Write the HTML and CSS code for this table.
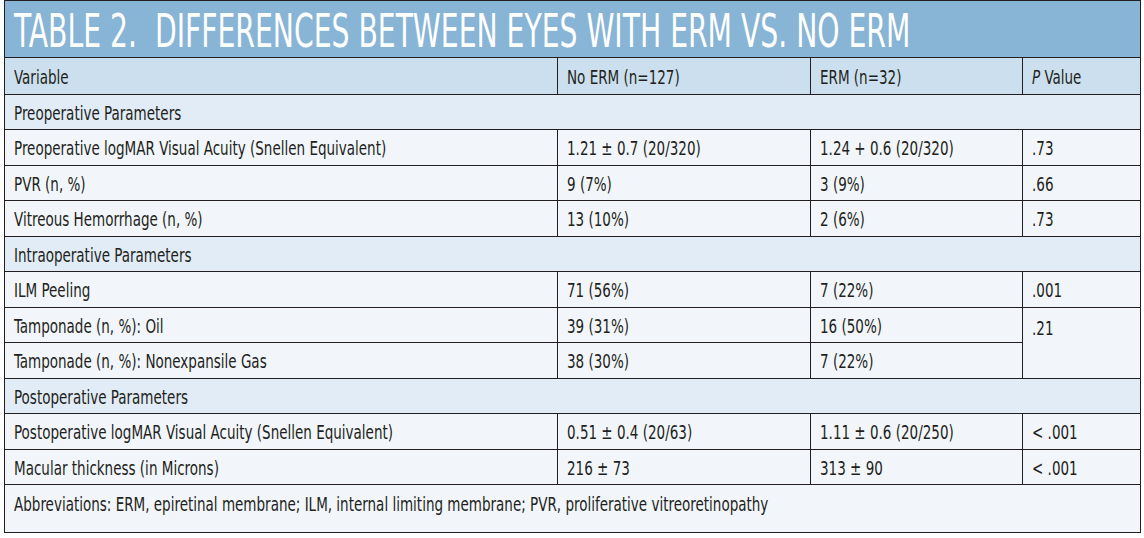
FILE: index.html
```html
<!DOCTYPE html>
<html lang="en">
<head>
<meta charset="utf-8">
<title>Table 2</title>
<link rel="stylesheet" href="styles.css">
</head>
<body>
<div class="frame">
  <div class="title"><span class="tt">TABLE 2.&nbsp; DIFFERENCES BETWEEN EYES WITH ERM VS. NO ERM</span></div>
  <table class="data">
    <colgroup><col class="c1"><col class="c2"><col class="c3"><col class="c4"></colgroup>
    <thead>
      <tr class="head">
        <th><span class="t">Variable</span></th>
        <th><span class="t">No ERM (n=127)</span></th>
        <th><span class="t">ERM (n=32)</span></th>
        <th><span class="t"><i>P</i> Value</span></th>
      </tr>
    </thead>
    <tbody>
      <tr class="sec"><td colspan="4"><span class="t">Preoperative Parameters</span></td></tr>
      <tr class="row">
        <td><span class="t">Preoperative logMAR Visual Acuity (Snellen Equivalent)</span></td>
        <td><span class="t">1.21 ± 0.7 (20/320)</span></td>
        <td><span class="t">1.24 + 0.6 (20/320)</span></td>
        <td><span class="t">.73</span></td>
      </tr>
      <tr class="row">
        <td><span class="t">PVR (n, %)</span></td>
        <td><span class="t">9 (7%)</span></td>
        <td><span class="t">3 (9%)</span></td>
        <td><span class="t">.66</span></td>
      </tr>
      <tr class="row">
        <td><span class="t">Vitreous Hemorrhage (n, %)</span></td>
        <td><span class="t">13 (10%)</span></td>
        <td><span class="t">2 (6%)</span></td>
        <td><span class="t">.73</span></td>
      </tr>
      <tr class="sec"><td colspan="4"><span class="t">Intraoperative Parameters</span></td></tr>
      <tr class="row">
        <td><span class="t">ILM Peeling</span></td>
        <td><span class="t">71 (56%)</span></td>
        <td><span class="t">7 (22%)</span></td>
        <td><span class="t">.001</span></td>
      </tr>
      <tr class="row">
        <td><span class="t">Tamponade (n, %): Oil</span></td>
        <td><span class="t">39 (31%)</span></td>
        <td><span class="t">16 (50%)</span></td>
        <td class="span2" rowspan="2"><span class="t">.21</span></td>
      </tr>
      <tr class="row">
        <td><span class="t">Tamponade (n, %): Nonexpansile Gas</span></td>
        <td><span class="t">38 (30%)</span></td>
        <td><span class="t">7 (22%)</span></td>
      </tr>
      <tr class="sec"><td colspan="4"><span class="t">Postoperative Parameters</span></td></tr>
      <tr class="row">
        <td><span class="t">Postoperative logMAR Visual Acuity (Snellen Equivalent)</span></td>
        <td><span class="t">0.51 ± 0.4 (20/63)</span></td>
        <td><span class="t">1.11 ± 0.6 (20/250)</span></td>
        <td><span class="t">&lt; .001</span></td>
      </tr>
      <tr class="row">
        <td><span class="t">Macular thickness (in Microns)</span></td>
        <td><span class="t">216 ± 73</span></td>
        <td><span class="t">313 ± 90</span></td>
        <td><span class="t">&lt; .001</span></td>
      </tr>
      <tr class="foot">
        <td colspan="4"><span class="t">Abbreviations: ERM, epiretinal membrane; ILM, internal limiting membrane; PVR, proliferative vitreoretinopathy</span></td>
      </tr>
    </tbody>
  </table>
</div>
</body>
</html>
```
FILE: styles.css
```css
html, body {
  margin: 0;
  padding: 0;
  background: #ffffff;
}

body {
  font-family: "DejaVu Sans Condensed", "DejaVu Sans", sans-serif;
  font-stretch: condensed;
  color: #231f20;
}

.frame {
  margin-left: 4px;
  width: 1137px;
  box-sizing: border-box;
  border: 1px solid #231f20;
  background: #f2f6fb;
}

.title {
  height: 57px;
  box-sizing: border-box;
  background: #88b4d5;
  border-bottom: 1px solid #231f20;
  display: flex;
  align-items: center;
  padding-left: 9px;
  overflow: visible;
  white-space: nowrap;
}

.tt {
  display: inline-block;
  color: #ffffff;
  font-size: 47px;
  font-weight: 400;
  line-height: 1;
  transform: scaleX(0.668);
  transform-origin: 0 50%;
  margin-top: 3px;
}

.data {
  width: 100%;
  border-collapse: collapse;
  table-layout: fixed;
  font-size: 19px;
}

.c1 { width: 552px; }
.c2 { width: 253px; }
.c3 { width: 212px; }
.c4 { width: auto; }

.data th,
.data td {
  border: 1px solid #231f20;
  padding: 2px 9px 0;
  text-align: left;
  font-weight: 400;
  vertical-align: middle;
  white-space: nowrap;
  line-height: 20px;
}

.data tr:first-child th { border-top: none; }
.data th:first-child,
.data td:first-child { border-left: none; }
.data th:last-child,
.data td:last-child { border-right: none; }
.data tr:last-child td { border-bottom: none; }

.head { height: 36px; background: #cbdfee; }
.sec { height: 35.5px; background: #e1ecf6; }
.row { height: 35.5px; background: #f2f6fb; }
.foot { height: 47px; background: #f2f6fb; }

.foot td {
  vertical-align: top;
  padding-top: 9px;
}

.data td.span2 {
  vertical-align: top;
  padding-top: 10px;
  border-right: none;
}

.t {
  display: inline-block;
  transform: scaleX(0.79);
  transform-origin: 0 50%;
}

.t i {
  font-style: italic;
}
```
